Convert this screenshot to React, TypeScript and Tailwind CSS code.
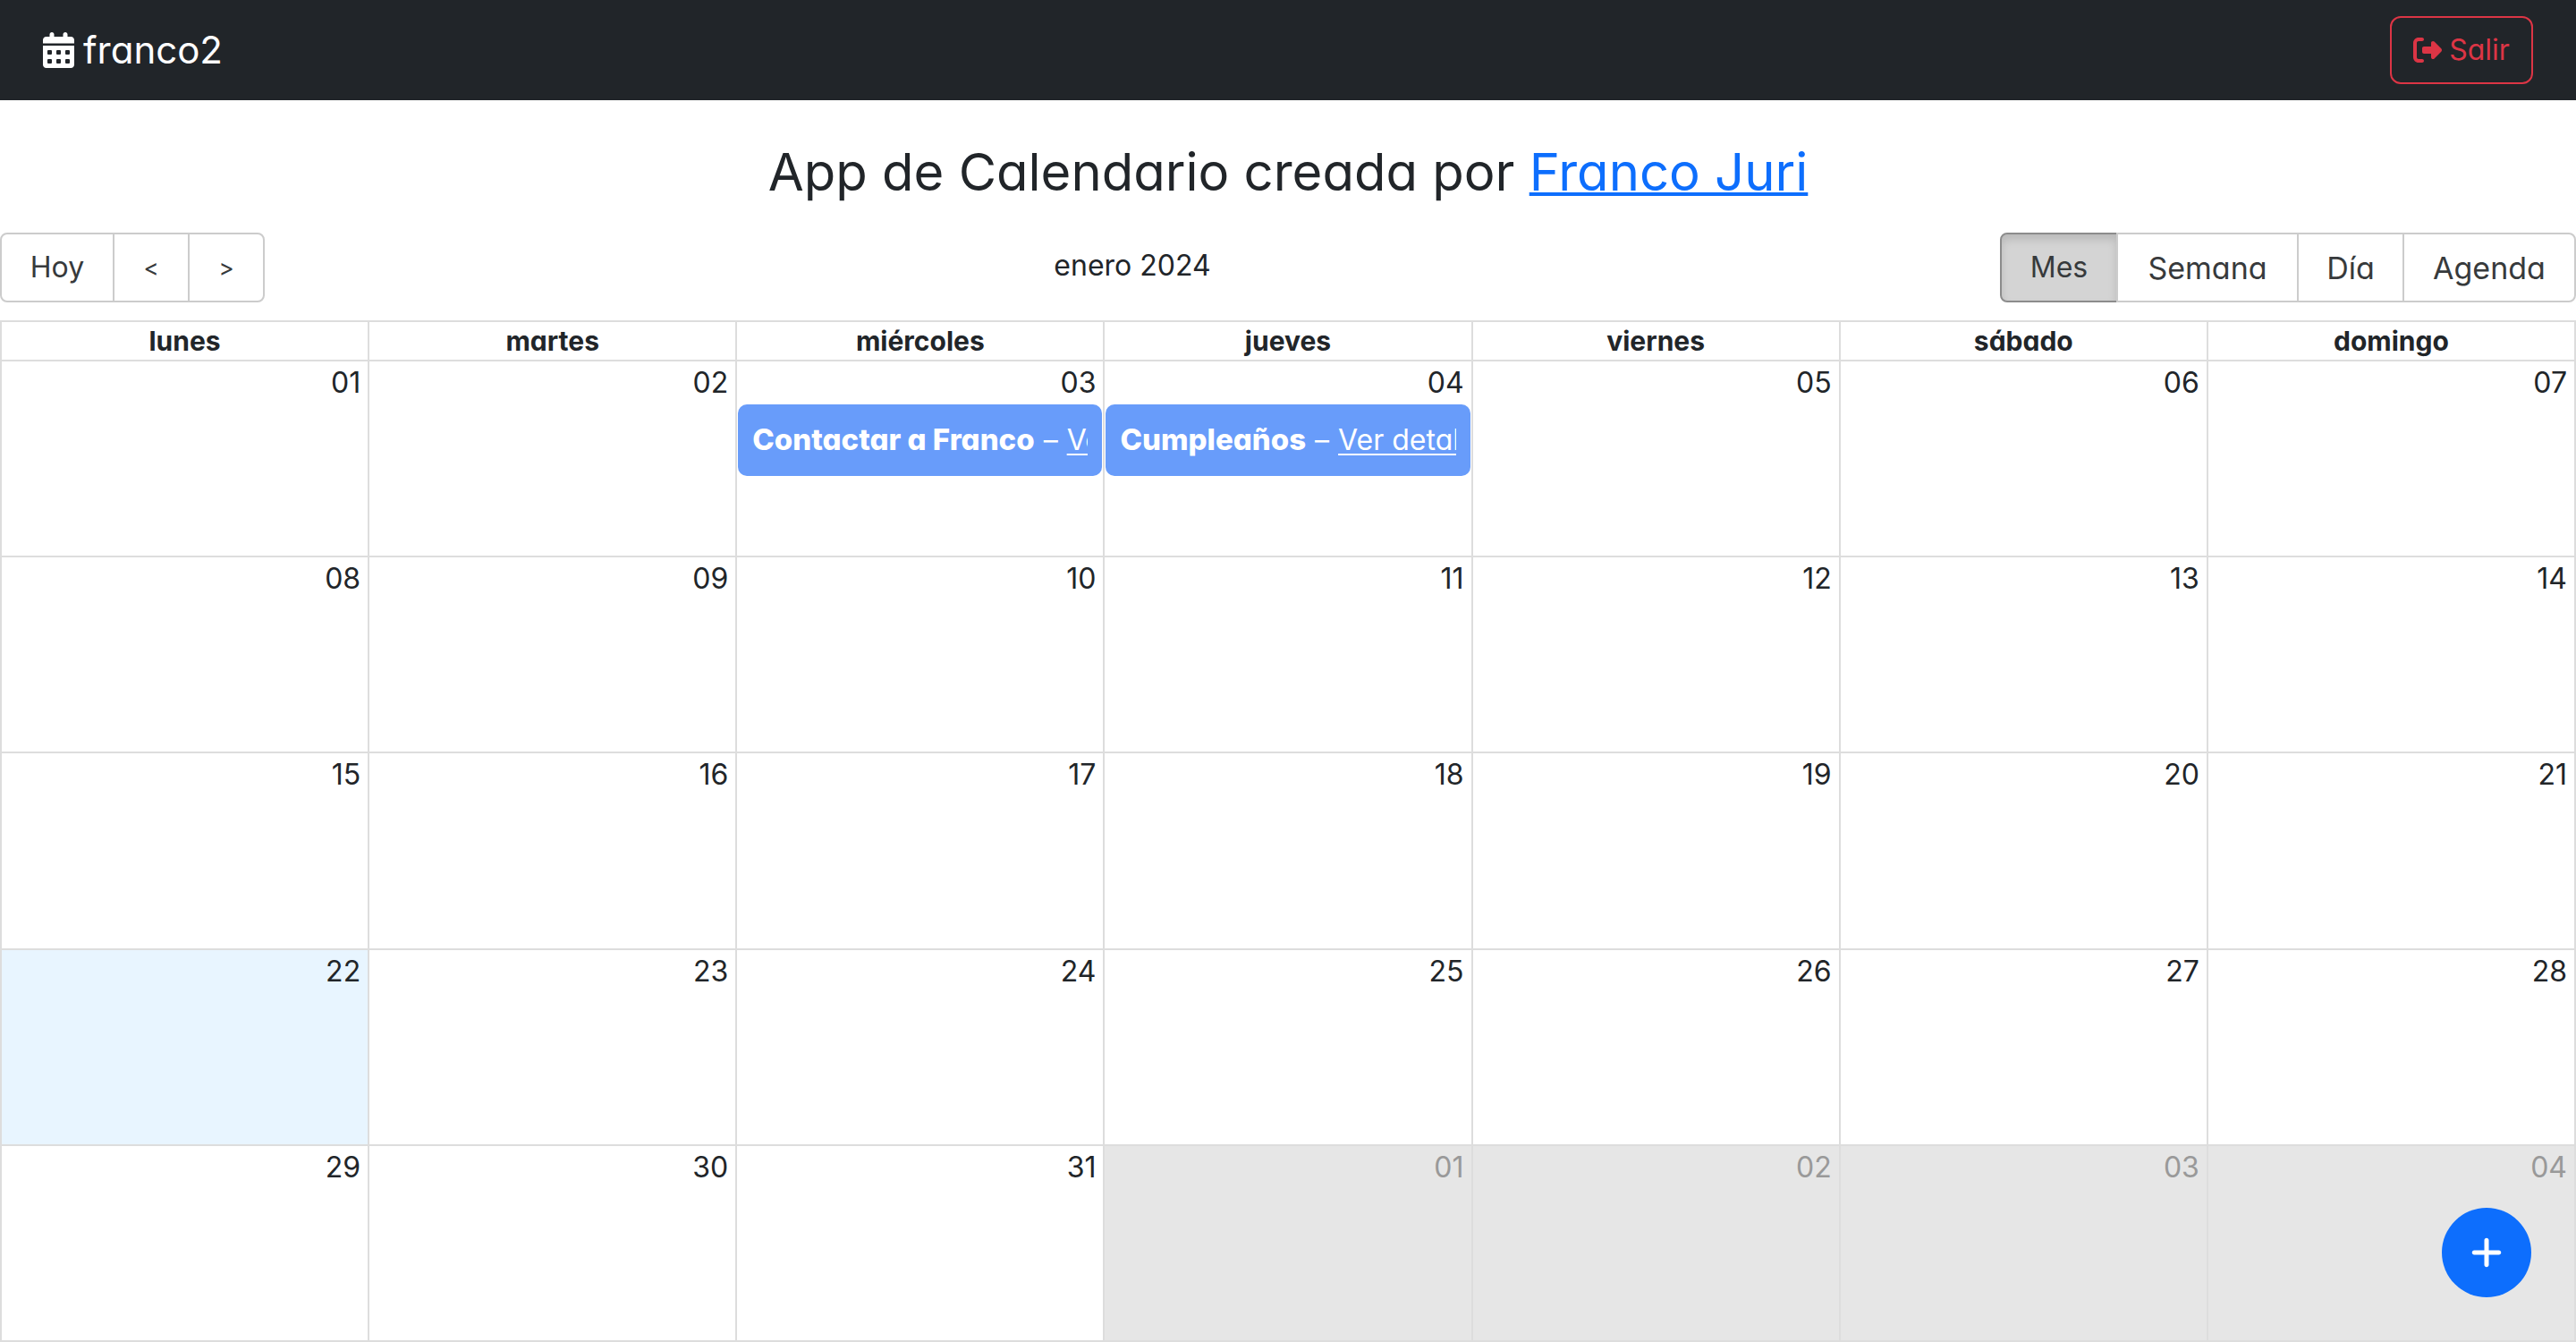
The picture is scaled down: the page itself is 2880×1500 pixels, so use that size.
import { FaCalendarDays, FaPlus, FaRightFromBracket } from "react-icons/fa6";
import clsx from "clsx";

type CalendarEvent = { title: string; notes: string };
type Day = { label: string; outside?: boolean; today?: boolean; event?: CalendarEvent };

const weekdays = ["lunes", "martes", "miércoles", "jueves", "viernes", "sábado", "domingo"];

const events: Record<number, CalendarEvent> = {
  3: { title: "Contactar a Franco", notes: "Ver detalles" },
  4: { title: "Cumpleaños", notes: "Ver detalles" },
};

const days: Day[] = Array.from({ length: 35 }, (_, i) => {
  const n = i + 1;
  const outside = n > 31;
  return {
    label: String(outside ? n - 31 : n).padStart(2, "0"),
    outside,
    today: n === 22,
    event: events[n],
  };
});

const weeks = [0, 1, 2, 3, 4].map((w) => days.slice(w * 7, w * 7 + 7));

const toolbarButton =
  "h-[78px] border-2 text-center text-[#373a3c] first:rounded-l-lg last:rounded-r-lg not-first:-ml-[2px]";

function Navbar() {
  return (
    <header className="flex h-28 items-center justify-between bg-[#212529] px-12">
      <span className="flex items-center gap-2.5 text-[42px] leading-[48px] text-white">
        <FaCalendarDays className="h-10 w-[35px]" />
        franco2
      </span>
      <button
        type="button"
        className="flex h-[76px] w-40 items-center justify-center gap-2 rounded-xl border-2 border-[#dc3545] text-[#dc3545]"
      >
        <FaRightFromBracket />
        Salir
      </button>
    </header>
  );
}

function Toolbar() {
  return (
    <div className="mb-5 flex items-center">
      <div className="flex">
        <button type="button" className={clsx(toolbarButton, "w-32 border-[#ccc]")}>Hoy</button>
        <button type="button" className={clsx(toolbarButton, "w-[86px] border-[#ccc] text-[26px]")}>&lt;</button>
        <button type="button" className={clsx(toolbarButton, "w-[86px] border-[#ccc] text-[26px]")}>&gt;</button>
      </div>
      <span className="grow pb-1 text-center">enero 2024</span>
      <div className="flex text-[34px]">
        <button
          type="button"
          className={clsx(
            toolbarButton,
            "w-[132px] border-[#8c8c8c] bg-[#d4d4d4] text-[32px] shadow-[inset_0_6px_10px_rgba(0,0,0,0.125)]",
          )}
        >
          Mes
        </button>
        <button type="button" className={clsx(toolbarButton, "w-[204px] border-[#ccc] bg-white")}>Semana</button>
        <button type="button" className={clsx(toolbarButton, "w-[120px] border-[#ccc]")}>Día</button>
        <button type="button" className={clsx(toolbarButton, "w-[194px] border-[#ccc]")}>Agenda</button>
      </div>
    </div>
  );
}

function DayCell({ day }: { day: Day }) {
  return (
    <td
      className={clsx(
        "border-2 border-[#ddd] p-0 align-top",
        day.outside && "bg-[#e6e6e6] text-[#999]",
        day.today && "bg-[#e8f5ff]",
      )}
    >
      <div className="h-12 pr-2 text-right leading-[48px]">{day.label}</div>
      {day.event && (
        <div className="mx-px h-20 rounded-[10px] bg-[#689cfa] px-4 text-white">
          <div className="overflow-hidden leading-[78px] whitespace-nowrap">
            <strong className="text-[33px] font-extrabold">{day.event.title}</strong>
            <span className="mx-2.5">–</span>
            <a href="#" className="underline decoration-2 underline-offset-4">{day.event.notes}</a>
          </div>
        </div>
      )}
    </td>
  );
}

export default function App() {
  return (
    <div className="flex h-screen flex-col bg-white font-['Inter',sans-serif] text-[32px] text-[#212529] [font-feature-settings:'cv11']">
      <Navbar />
      <h1 className="mt-[46px] mb-[34px] text-center text-[58px] leading-[68px]">
        App de Calendario creada por{" "}
        <a href="#" className="text-[#0d6efd] underline decoration-4">Franco Juri</a>
      </h1>
      <Toolbar />
      <div className="min-h-0 grow">
        <table className="h-full w-full table-fixed border-collapse">
          <thead>
            <tr className="h-11">
              {weekdays.map((d) => (
                <th key={d} className="border-2 border-[#ddd] p-0 text-[30px] leading-[42px] font-bold">{d}</th>
              ))}
            </tr>
          </thead>
          <tbody>
            {weeks.map((week, i) => (
              <tr key={i} className="h-1/5">
                {week.map((day) => (
                  <DayCell key={day.label} day={day} />
                ))}
              </tr>
            ))}
          </tbody>
        </table>
      </div>
      <button
        type="button"
        aria-label="Agregar evento"
        className="fixed right-[50px] bottom-[50px] flex size-[100px] items-center justify-center rounded-full bg-[#0d6efd] text-[40px] text-white"
      >
        <FaPlus />
      </button>
    </div>
  );
}
